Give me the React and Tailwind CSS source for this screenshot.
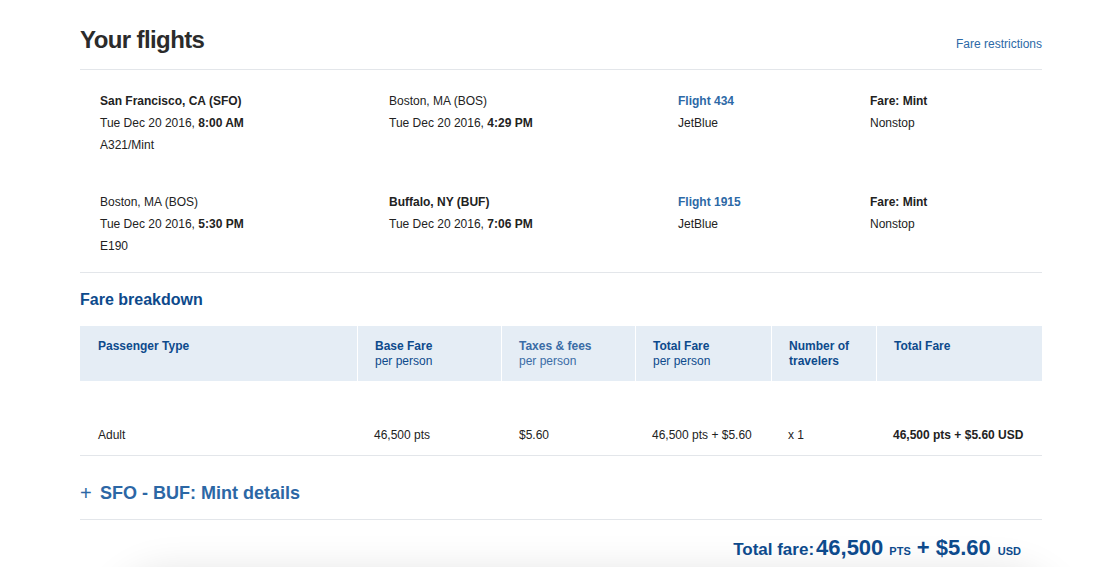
const SEGMENTS = [
  {
    from: 'San Francisco, CA (SFO)', fromBold: true, depDate: 'Tue Dec 20 2016, ', depTime: '8:00 AM', aircraft: 'A321/Mint',
    to: 'Boston, MA (BOS)', toBold: false, arrDate: 'Tue Dec 20 2016, ', arrTime: '4:29 PM',
    flight: 'Flight 434', carrier: 'JetBlue', fare: 'Fare: Mint', stops: 'Nonstop',
  },
  {
    from: 'Boston, MA (BOS)', fromBold: false, depDate: 'Tue Dec 20 2016, ', depTime: '5:30 PM', aircraft: 'E190',
    to: 'Buffalo, NY (BUF)', toBold: true, arrDate: 'Tue Dec 20 2016, ', arrTime: '7:06 PM',
    flight: 'Flight 1915', carrier: 'JetBlue', fare: 'Fare: Mint', stops: 'Nonstop',
  },
]

const COLS = 'grid grid-cols-[277px_144px_134px_136px_105px_1fr]'

export default function App() {
  return (
    <div className="min-h-screen bg-white text-[#222] font-['Liberation_Sans',Arial,sans-serif] overflow-hidden">
      <div className="mx-[80px] w-[962px] pt-[24px]">

        {/* ── Header ─────────────────────────────────── */}
        <div className="flex items-end justify-between pb-[13px] border-b border-[#e3e6ea]">
          <h1 className="text-[24px] leading-[32px] font-bold tracking-[-0.6px] text-[#2b2b2b]">Your flights</h1>
          <a className="text-[12px] leading-[18px] text-[#2d69a6] mb-[3px]">Fare restrictions</a>
        </div>

        {/* ── Segments ───────────────────────────────── */}
        <div className="pt-[20px] pb-[15px] px-[20px] flex flex-col gap-[35px] border-b border-[#e3e6ea] text-[12px] leading-[22px]">
          {SEGMENTS.map(s => (
            <div key={s.flight} className="grid grid-cols-[289px_289px_192px_1fr]">
              <div>
                <p className={s.fromBold ? 'font-bold' : ''}>{s.from}</p>
                <p>{s.depDate}<strong>{s.depTime}</strong></p>
                <p>{s.aircraft}</p>
              </div>
              <div>
                <p className={s.toBold ? 'font-bold' : ''}>{s.to}</p>
                <p>{s.arrDate}<strong>{s.arrTime}</strong></p>
              </div>
              <div>
                <p className="font-bold text-[#2d69a6]">{s.flight}</p>
                <p>{s.carrier}</p>
              </div>
              <div>
                <p className="font-bold">{s.fare}</p>
                <p>{s.stops}</p>
              </div>
            </div>
          ))}
        </div>

        {/* ── Fare breakdown ─────────────────────────── */}
        <h2 className="mt-[15px] mb-[14px] text-[16px] leading-[24px] font-bold text-[#0d4a8c]">Fare breakdown</h2>

        <div className={`${COLS} bg-[#e5edf5] h-[55px] text-[12px] leading-[15px] text-[#0d4a8c]`}>
          <div className="pl-[18px] pt-[13px] font-bold">Passenger Type</div>
          <div className="pl-[17px] pt-[13px] border-l border-white"><p className="font-bold">Base Fare</p><p>per person</p></div>
          <div className="pl-[17px] pt-[13px] border-l border-white text-[#3a6ca6]"><p className="font-bold">Taxes &amp; fees</p><p>per person</p></div>
          <div className="pl-[17px] pt-[13px] border-l border-white"><p className="font-bold">Total Fare</p><p>per person</p></div>
          <div className="pl-[17px] pt-[13px] border-l border-white font-bold"><p>Number of</p><p>travelers</p></div>
          <div className="pl-[17px] pt-[13px] border-l border-white font-bold">Total Fare</div>
        </div>

        <div className={`${COLS} pt-[45px] pb-[11px] text-[12px] leading-[18px] border-b border-[#e3e6ea]`}>
          <div className="pl-[18px]">Adult</div>
          <div className="pl-[17px]">46,500 pts</div>
          <div className="pl-[18px]">$5.60</div>
          <div className="pl-[17px]">46,500 pts + $5.60</div>
          <div className="pl-[17px]">x 1</div>
          <div className="pl-[17px] font-bold">46,500 pts + $5.60 USD</div>
        </div>

        {/* ── Details toggle ─────────────────────────── */}
        <div className="flex items-center gap-[10px] pt-[25px] pb-[14px] border-b border-[#e3e6ea] text-[#2c67a5]">
          <span className="text-[20px] leading-[24px] w-[10px]">+</span>
          <span className="text-[18px] leading-[24px] font-bold">SFO - BUF: Mint details</span>
        </div>

        {/* ── Total ──────────────────────────────────── */}
        <div className="relative">
          <div className="absolute left-[30px] right-[-20px] top-[56px] h-[200px] rounded-[60px] bg-white shadow-[0_-4px_40px_rgba(0,0,0,0.12)]" />
          <div className="relative flex items-baseline justify-end pr-[21px] pt-[11px] font-bold text-[#0d4a8c]">
            <span className="text-[17px]">Total fare:</span>
            <span className="text-[22px] ml-[2px]">46,500</span>
            <span className="text-[11px] ml-[6px]">PTS</span>
            <span className="text-[22px] ml-[6px]">+ $5.60</span>
            <span className="text-[11px] ml-[7px]">USD</span>
          </div>
        </div>
      </div>
    </div>
  )
}
